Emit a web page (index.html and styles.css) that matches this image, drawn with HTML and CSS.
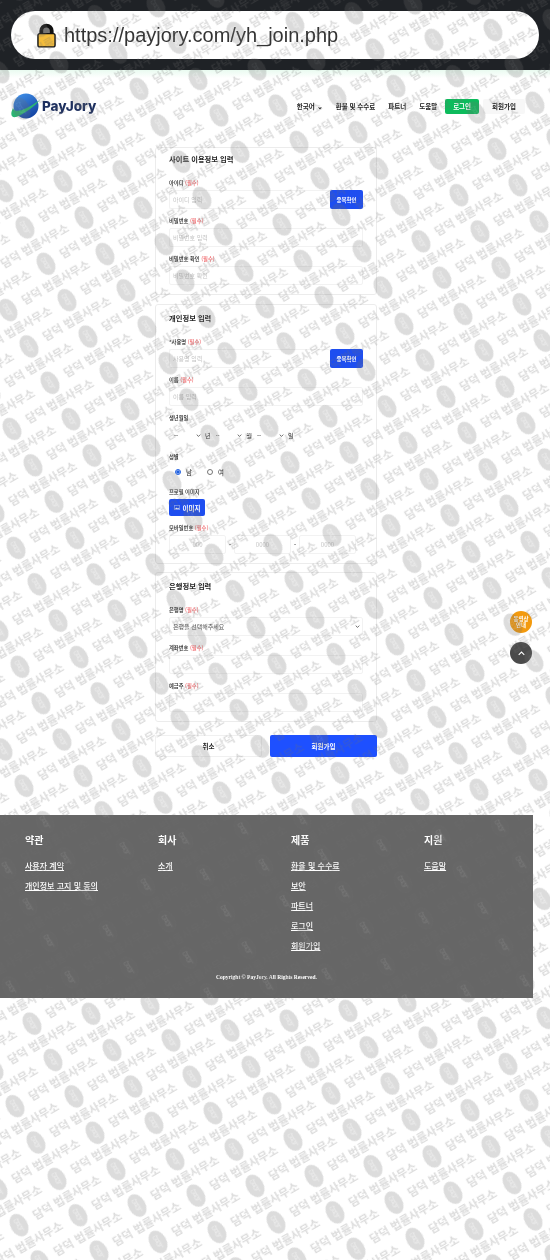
FILE: index.html
```html
<!DOCTYPE html>
<html lang="ko">
<head>
    <meta charset="UTF-8">
    <meta name="viewport" content="width=device-width, initial-scale=1.0">
    <title>PayJory 회원가입</title>
    <link rel="stylesheet" href="styles.css">
</head>
<body>

    <div class="url-bar">
        <div class="url-pill">
            <svg class="lock-icon" viewBox="0 0 20 26">
                <path d="M4.500 13V8a5.500 5.500 0 0 1 11 0V13" fill="#777" stroke="#111" stroke-width="4"/>
                <rect x="1" y="11" width="18" height="14" rx="2" fill="#f4bd3c" stroke="#111" stroke-width="1.500"/>
            </svg>
            <span class="url-text">https://payjory.com/yh_join.php</span>
        </div>
    </div>
    <div class="green-strip"></div>

    <div class="page">
        <header class="site-header">
            <a class="logo">
                <svg class="logo-icon" viewBox="0 0 30 28">
                    <defs>
                        <linearGradient id="globe" x1="0.2" y1="0" x2="0.8" y2="1">
                            <stop offset="0" stop-color="#3f8fe8"/>
                            <stop offset="1" stop-color="#123f9e"/>
                        </linearGradient>
                    </defs>
                    <circle cx="15" cy="14" r="12.500" fill="url(#globe)"/>
                    <path d="M2 16C-1 22 0 26 5 25C12 23 24 14 29 8C24 11 17 16 11 18C6 19.500 3 19 2 16Z" fill="#2bb673"/>
                </svg>
                <span class="logo-text">PayJory</span>
            </a>
            <nav class="top-nav">
                <a>한국어<span class="caret">⌄</span></a>
                <a>환불 및 수수료</a>
                <a>파트너</a>
                <a>도움말</a>
                <div class="nav-auth">
                    <a class="btn-login">로그인</a>
                    <a class="btn-register">회원가입</a>
                </div>
            </nav>
        </header>

        <main class="join-form">
            <section class="card card-site">
                <h2>사이트 이용정보 입력</h2>
                <div class="field">
                    <label>아이디 <em>(필수)</em></label>
                    <div class="input-row">
                        <input type="text" class="form-input" placeholder="아이디 입력">
                        <button class="btn-check">중복확인</button>
                    </div>
                </div>
                <div class="field">
                    <label>비밀번호 <em>(필수)</em></label>
                    <input type="password" class="form-input" placeholder="비밀번호 입력">
                </div>
                <div class="field">
                    <label>비밀번호 확인 <em>(필수)</em></label>
                    <input type="password" class="form-input" placeholder="비밀번호 확인">
                </div>
            </section>

            <section class="card">
                <h2>개인정보 입력</h2>
                <div class="field">
                    <label>*사용명 <em>(필수)</em></label>
                    <div class="input-row">
                        <input type="text" class="form-input" placeholder="사용명 입력">
                        <button class="btn-check">중복확인</button>
                    </div>
                </div>
                <div class="field">
                    <label>이름 <em>(필수)</em></label>
                    <input type="text" class="form-input" placeholder="이름 입력">
                </div>
                <div class="field">
                    <label>생년월일</label>
                    <div class="birth-row">
                        <div class="birth-item"><select class="birth-select"><option>--</option></select><span>년</span></div>
                        <div class="birth-item"><select class="birth-select"><option>--</option></select><span>월</span></div>
                        <div class="birth-item"><select class="birth-select"><option>--</option></select><span>일</span></div>
                    </div>
                </div>
                <div class="field">
                    <label>성별</label>
                    <div class="radio-row">
                        <span class="radio-item"><input type="radio" name="gender" checked>남</span>
                        <span class="radio-item"><input type="radio" name="gender">여</span>
                    </div>
                </div>
                <div class="field">
                    <label>프로필 이미지</label>
                    <button class="btn-image">
                        <svg class="image-icon" viewBox="0 0 12 10">
                            <rect x="0.500" y="0.500" width="11" height="9" rx="1" fill="none" stroke="#fff"/>
                            <path d="M2 8l3-3 2 2 1.500-1.500L10 8z" fill="#fff"/>
                        </svg>
                        이미지
                    </button>
                </div>
                <div class="field">
                    <label>모바일번호 <em>(필수)</em></label>
                    <div class="phone-row">
                        <input type="text" class="form-input phone-input" placeholder="000">
                        <span>-</span>
                        <input type="text" class="form-input phone-input" placeholder="0000">
                        <span>-</span>
                        <input type="text" class="form-input phone-input" placeholder="0000">
                    </div>
                </div>
            </section>

            <section class="card card-bank">
                <h2>은행정보 입력</h2>
                <div class="field">
                    <label>은행명 <em>(필수)</em></label>
                    <select class="bank-select"><option>은행을 선택해주세요</option></select>
                </div>
                <div class="field">
                    <label>계좌번호 <em>(필수)</em></label>
                    <input type="text" class="form-input">
                </div>
                <div class="field">
                    <label>예금주 <em>(필수)</em></label>
                    <input type="text" class="form-input">
                </div>
            </section>

            <div class="form-actions">
                <button class="btn-cancel">취소</button>
                <button class="btn-submit">회원가입</button>
            </div>
        </main>

        <footer class="site-footer">
            <div class="footer-cols">
                <div>
                    <h3>약관</h3>
                    <a>사용자 계약</a>
                    <a>개인정보 고지 및 동의</a>
                </div>
                <div>
                    <h3>회사</h3>
                    <a>소개</a>
                </div>
                <div>
                    <h3>제품</h3>
                    <a>환율 및 수수료</a>
                    <a>보안</a>
                    <a>파트너</a>
                    <a>로그인</a>
                    <a>회원가입</a>
                </div>
                <div>
                    <h3>지원</h3>
                    <a>도움말</a>
                </div>
            </div>
            <p class="copyright">Copyright © PayJory. All Rights Reserved.</p>
        </footer>
    </div>

    <a class="float-consult">동영상<br>안내</a>
    <a class="float-top">
        <svg viewBox="0 0 10 6"><path d="M1 5l4-4 4 4" fill="none" stroke="#fff" stroke-width="1.500"/></svg>
    </a>

    <!-- 워터마크 -->
    <svg class="watermark" width="550" height="1260">
        <defs>
            <g id="stamp">
                <ellipse cx="0" cy="0" rx="8.500" ry="12" class="wm-oval"/>
                <text x="0" y="-1.500" class="wm-inner">담</text>
                <text x="0" y="5.500" class="wm-inner">덕</text>
                <text x="17" y="4" class="wm-text">담덕 법률사무소</text>
            </g>
            <pattern id="wm" width="112" height="42" patternUnits="userSpaceOnUse" patternTransform="translate(36.600 1055.600) rotate(-30)">
                <use href="#stamp" x="12" y="12"/>
                <use href="#stamp" x="68" y="33"/>
                <use href="#stamp" x="68" y="-9"/>
                <use href="#stamp" x="-44" y="33"/>
                <use href="#stamp" x="-44" y="-9"/>
            </pattern>
        </defs>
        <rect width="550" height="1260" fill="url(#wm)"/>
    </svg>

</body>
</html>
```

FILE: styles.css
```css
body {
    font-family: "Noto Sans CJK KR", "Noto Sans", sans-serif;
    margin: 0;
    padding: 0;
    background-color: #fff;
    color: #222;
    min-height: 1260px;
    overflow: hidden;
    filter: blur(0.3px);
}

.url-bar {
    background-color: #1f2226;
    height: 70px;
    padding: 11px;
    box-sizing: border-box;
}

.url-pill {
    display: flex;
    align-items: center;
    height: 48px;
    padding-left: 26px;
    background-color: #fff;
    border-radius: 24px;
}

.lock-icon {
    width: 19px;
    height: 25px;
    margin-right: 8px;
}

.url-text {
    font-family: "Liberation Sans", sans-serif;
    font-size: 20px;
    color: #333;
}

.green-strip {
    height: 8px;
    background: linear-gradient(#e9fbf0, #fff);
}

.page {
    width: 533px;
}

.site-header {
    display: flex;
    justify-content: space-between;
    align-items: center;
    height: 56px;
    padding: 0 8px 0 11px;
}

.logo {
    display: flex;
    align-items: center;
}

.logo-icon {
    width: 30px;
    height: 28px;
    margin-right: 1px;
}

.logo-text {
    font-family: "Inter", sans-serif;
    font-size: 13.500px;
    font-weight: 800;
    color: #1d2f5e;
}

.top-nav {
    display: flex;
    align-items: center;
    gap: 13px;
    font-size: 6.500px;
    font-weight: 700;
}

.caret {
    margin-left: 2px;
}

.nav-auth {
    display: flex;
    align-items: center;
    gap: 4px;
    margin-left: -5px;
}

.btn-login {
    padding: 3px 8px;
    line-height: 9px;
    background-color: #0dbb5c;
    color: #fff;
    border-radius: 2px;
}

.btn-register {
    padding: 3px 9px;
    line-height: 9px;
    background-color: #f7f7f7;
    border-radius: 2px;
}

.join-form {
    width: 222px;
    margin: 13px 0 0 155px;
}

.card {
    box-sizing: border-box;
    border: 1px solid #ececec;
    border-radius: 3px;
    padding: 8px 13px 9px;
    margin-bottom: 9px;
}

.card-site {
    padding-top: 6px;
}

.card-bank {
    margin-top: -1px;
    margin-bottom: 0;
}

.card h2 {
    font-size: 7.300px;
    font-weight: 700;
    line-height: 10px;
    margin: 0 0 15px;
}

.field {
    margin-bottom: 8px;
}

.field:last-child {
    margin-bottom: 0;
}

.field label {
    display: block;
    font-size: 5.300px;
    font-weight: 500;
    line-height: 8px;
    margin-bottom: 3px;
}

.field em {
    font-style: normal;
    color: #f0686c;
}

.form-input {
    display: block;
    box-sizing: border-box;
    width: 100%;
    height: 19px;
    padding: 0 3px;
    font-family: inherit;
    font-size: 6px;
    background-color: #fff;
    border: 1px solid #f2f2f2;
    border-radius: 2px;
}

.form-input::placeholder {
    color: #c4c4c4;
}

.input-row {
    display: flex;
}

.input-row .form-input {
    flex: 1;
    border-right: none;
}

.btn-check {
    flex: none;
    width: 33px;
    height: 19px;
    padding: 0;
    font-family: inherit;
    font-size: 5.500px;
    font-weight: 700;
    color: #fff;
    background-color: #1e4ef0;
    border: none;
    border-radius: 2px;
}

.birth-row {
    display: flex;
    height: 20px;
}

.birth-item {
    display: flex;
    align-items: center;
    width: 41.500px;
    font-size: 6px;
}

/* 화살표는 select 기본 모양 대신 작은 svg 로 */
.birth-select,
.bank-select {
    appearance: none;
    font-family: inherit;
    font-size: 6px;
    background: #fff url("data:image/svg+xml,%3Csvg xmlns='http://www.w3.org/2000/svg' viewBox='0 0 8 5'%3E%3Cpath d='M1 1l3 3 3-3' fill='none' stroke='%23333' stroke-width='1.200'/%3E%3C/svg%3E") no-repeat right 2px center / 5px 3px;
}

.birth-select {
    width: 38px;
    height: 20px;
    margin-right: 2px;
    padding: 0 0 0 5px;
    color: #333;
    border: none;
}

.radio-row {
    display: flex;
    align-items: center;
    height: 16px;
    padding-left: 6px;
    font-size: 6.500px;
}

.radio-item {
    display: flex;
    align-items: center;
    width: 32px;
}

.radio-item input {
    width: 6px;
    height: 6px;
    margin: 0 5px 0 0;
    accent-color: #1e5fe0;
}

.btn-image {
    display: flex;
    align-items: center;
    justify-content: center;
    gap: 3px;
    width: 36px;
    height: 17px;
    padding: 0;
    font-family: inherit;
    font-size: 6.500px;
    font-weight: 700;
    color: #fff;
    background-color: #1e4ef0;
    border: none;
    border-radius: 2px;
}

.image-icon {
    width: 6px;
    height: 5px;
}

.phone-row {
    display: flex;
    align-items: center;
    gap: 3px;
    width: 187px;
    font-size: 6px;
}

.phone-row span {
    flex: none;
    width: 2px;
}

.phone-input {
    flex: 1;
    min-width: 0;
    text-align: center;
}

.bank-select {
    display: block;
    width: 100%;
    height: 19px;
    padding: 0 3px;
    color: #555;
    border: 1px solid #f2f2f2;
    border-radius: 2px;
}

.form-actions {
    display: flex;
    justify-content: space-between;
    margin-top: 13px;
}

.btn-cancel,
.btn-submit {
    width: 107px;
    height: 22px;
    padding: 0;
    font-family: inherit;
    font-size: 6.500px;
    font-weight: 700;
    border-radius: 2px;
}

.btn-cancel {
    color: #222;
    background-color: #fff;
    border: 1px solid #f0f0f0;
}

.btn-submit {
    color: #fff;
    background-color: #1e50ff;
    border: none;
}

.site-footer {
    margin-top: 58px;
    padding: 20px 0 16px;
    background-color: #666;
    color: #fff;
}

.footer-cols {
    display: grid;
    grid-template-columns: repeat(4, 133px);
    padding-left: 25px;
}

.footer-cols h3 {
    font-size: 10px;
    font-weight: 700;
    line-height: 10px;
    margin: 0 0 16px;
}

.footer-cols a {
    display: block;
    font-size: 8px;
    font-weight: 500;
    line-height: 10px;
    margin-bottom: 10px;
    text-decoration: underline;
}

.copyright {
    margin: 11px 0 0;
    font-family: "Liberation Serif", serif;
    font-size: 5.500px;
    font-weight: 700;
    line-height: 10px;
    text-align: center;
}

.float-consult,
.float-top {
    position: fixed;
    left: 510px;
    display: flex;
    align-items: center;
    justify-content: center;
    width: 22px;
    height: 22px;
    border-radius: 50%;
    color: #fff;
}

.float-consult {
    top: 611px;
    background-color: #f39a0e;
    font-size: 5.500px;
    font-weight: 700;
    line-height: 6.500px;
    text-align: center;
}

.float-top {
    top: 642px;
    background-color: #4a4a4a;
}

.float-top svg {
    width: 7px;
    height: 5px;
}

/* 회색을 푸터 색에 맞춰 어두운 영역에서는 거의 안 보이게 */
.watermark {
    position: absolute;
    top: 0;
    left: 0;
    pointer-events: none;
    opacity: 0.24;
}

.wm-oval {
    fill: #6e6e6e;
}

.wm-inner {
    fill: #bcbcbc;
    font-size: 6.500px;
    text-anchor: middle;
}

.wm-text {
    fill: #6e6e6e;
    font-size: 11.400px;
    font-weight: 700;
}
```
